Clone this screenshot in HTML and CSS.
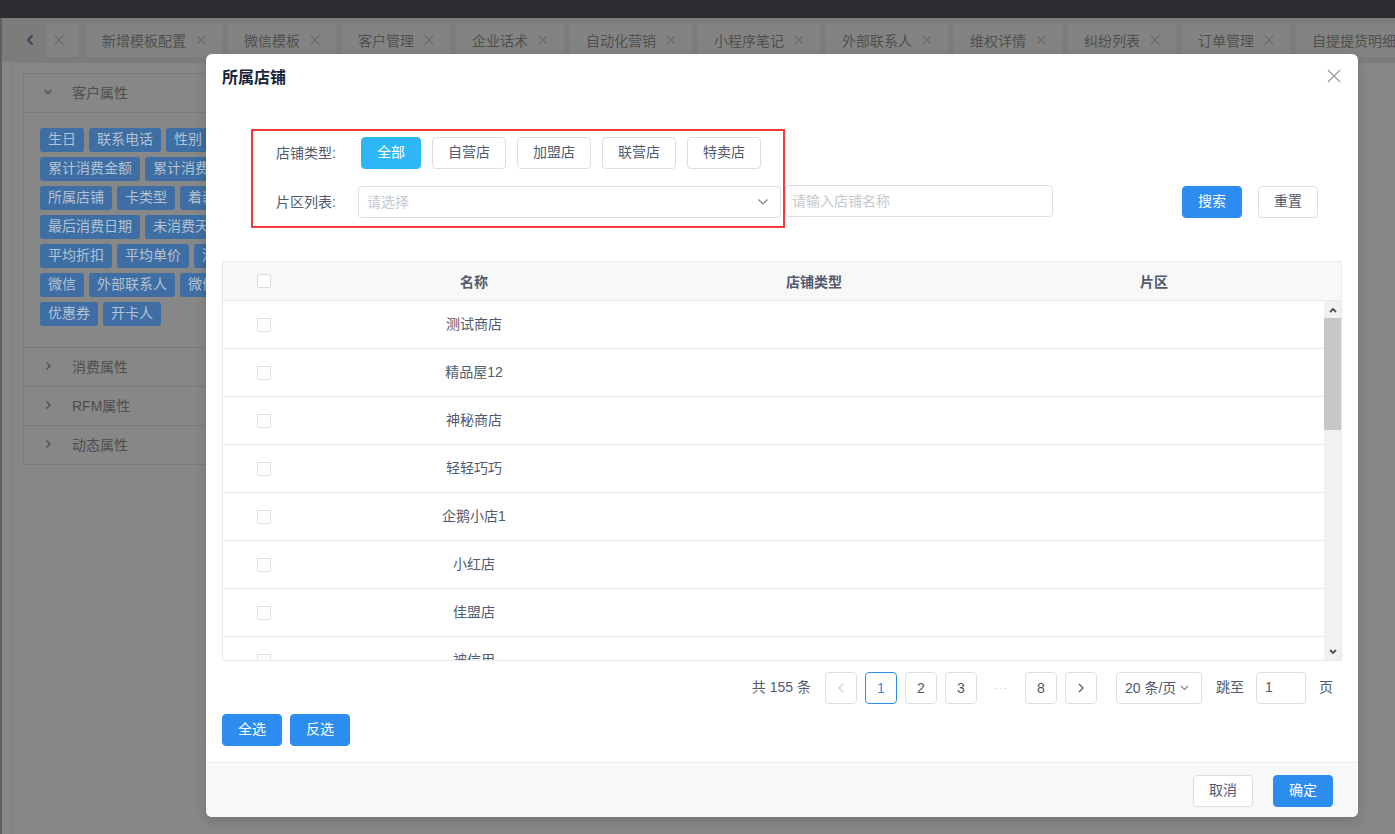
FILE: index.html
```html
<!DOCTYPE html>
<html lang="zh-CN">
<head>
<meta charset="utf-8">
<title>所属店铺</title>
<link rel="stylesheet" href="styles.css">
</head>
<body>
<div class="topbar"></div>
<div class="app">
  <div class="tabbar">
    <div class="tab-prev"><svg width="8" height="12" viewBox="0 0 8 12"><polyline points="6.5,1.5 2,6 6.5,10.5" fill="none" stroke="#37445a" stroke-width="2"/></svg></div>
    <div class="tab tab-stub"><svg class="x" width="10" height="10" viewBox="0 0 10 10"><path d="M1 1L9 9M9 1L1 9" stroke="#6c6c6c" stroke-width="1.1"/></svg></div>
    <div class="tab"><span>新增模板配置</span><svg class="x" width="10" height="10" viewBox="0 0 10 10"><path d="M1 1L9 9M9 1L1 9" stroke="#6c6c6c" stroke-width="1.1"/></svg></div>
    <div class="tab"><span>微信模板</span><svg class="x" width="10" height="10" viewBox="0 0 10 10"><path d="M1 1L9 9M9 1L1 9" stroke="#6c6c6c" stroke-width="1.1"/></svg></div>
    <div class="tab"><span>客户管理</span><svg class="x" width="10" height="10" viewBox="0 0 10 10"><path d="M1 1L9 9M9 1L1 9" stroke="#6c6c6c" stroke-width="1.1"/></svg></div>
    <div class="tab"><span>企业话术</span><svg class="x" width="10" height="10" viewBox="0 0 10 10"><path d="M1 1L9 9M9 1L1 9" stroke="#6c6c6c" stroke-width="1.1"/></svg></div>
    <div class="tab"><span>自动化营销</span><svg class="x" width="10" height="10" viewBox="0 0 10 10"><path d="M1 1L9 9M9 1L1 9" stroke="#6c6c6c" stroke-width="1.1"/></svg></div>
    <div class="tab"><span>小程序笔记</span><svg class="x" width="10" height="10" viewBox="0 0 10 10"><path d="M1 1L9 9M9 1L1 9" stroke="#6c6c6c" stroke-width="1.1"/></svg></div>
    <div class="tab"><span>外部联系人</span><svg class="x" width="10" height="10" viewBox="0 0 10 10"><path d="M1 1L9 9M9 1L1 9" stroke="#6c6c6c" stroke-width="1.1"/></svg></div>
    <div class="tab"><span>维权详情</span><svg class="x" width="10" height="10" viewBox="0 0 10 10"><path d="M1 1L9 9M9 1L1 9" stroke="#6c6c6c" stroke-width="1.1"/></svg></div>
    <div class="tab"><span>纠纷列表</span><svg class="x" width="10" height="10" viewBox="0 0 10 10"><path d="M1 1L9 9M9 1L1 9" stroke="#6c6c6c" stroke-width="1.1"/></svg></div>
    <div class="tab"><span>订单管理</span><svg class="x" width="10" height="10" viewBox="0 0 10 10"><path d="M1 1L9 9M9 1L1 9" stroke="#6c6c6c" stroke-width="1.1"/></svg></div>
    <div class="tab"><span>自提提货明细</span><svg class="x" width="10" height="10" viewBox="0 0 10 10"><path d="M1 1L9 9M9 1L1 9" stroke="#6c6c6c" stroke-width="1.1"/></svg></div>
  </div>
  <div class="main">
    <div class="card">
      <div class="collapse">
        <div class="col-item">
          <div class="col-head"><svg class="arr" width="10" height="10" viewBox="0 0 10 10"><polyline points="1.5,3 5,6.5 8.5,3" fill="none" stroke="#4e4e4e" stroke-width="1.3"/></svg><span>客户属性</span></div>
          <div class="col-body">
            <div class="tag-row"><span class="tag">生日</span><span class="tag">联系电话</span><span class="tag">性别</span><span class="tag">年龄</span><span class="tag">会员等级</span></div>
            <div class="tag-row"><span class="tag">累计消费金额</span><span class="tag">累计消费次数</span><span class="tag">积分</span></div>
            <div class="tag-row"><span class="tag">所属店铺</span><span class="tag">卡类型</span><span class="tag">着装风格</span><span class="tag">导购</span></div>
            <div class="tag-row"><span class="tag">最后消费日期</span><span class="tag">未消费天数</span><span class="tag">储值</span></div>
            <div class="tag-row"><span class="tag">平均折扣</span><span class="tag">平均单价</span><span class="tag">消费件数</span></div>
            <div class="tag-row"><span class="tag">微信</span><span class="tag">外部联系人</span><span class="tag">微信昵称</span></div>
            <div class="tag-row"><span class="tag">优惠券</span><span class="tag">开卡人</span></div>
          </div>
        </div>
        <div class="col-item"><div class="col-head"><svg class="arr" width="10" height="10" viewBox="0 0 10 10"><polyline points="3.5,1.5 7,5 3.5,8.5" fill="none" stroke="#4e4e4e" stroke-width="1.3"/></svg><span>消费属性</span></div></div>
        <div class="col-item"><div class="col-head"><svg class="arr" width="10" height="10" viewBox="0 0 10 10"><polyline points="3.5,1.5 7,5 3.5,8.5" fill="none" stroke="#4e4e4e" stroke-width="1.3"/></svg><span>RFM属性</span></div></div>
        <div class="col-item last"><div class="col-head"><svg class="arr" width="10" height="10" viewBox="0 0 10 10"><polyline points="3.5,1.5 7,5 3.5,8.5" fill="none" stroke="#4e4e4e" stroke-width="1.3"/></svg><span>动态属性</span></div></div>
      </div>
    </div>
  </div>
</div>

<div class="modal">
  <div class="modal-head">
    <div class="modal-title">所属店铺</div>
    <a class="modal-close"><svg width="14" height="14" viewBox="0 0 14 14"><path d="M1 1L13 13M13 1L1 13" stroke="#999" stroke-width="1.2"/></svg></a>
  </div>
  <div class="modal-body">
    <div class="filter">
      <div class="frow">
        <label class="flabel">店铺类型:</label>
        <div class="type-btns">
          <button class="btn btn-info">全部</button>
          <button class="btn">自营店</button>
          <button class="btn">加盟店</button>
          <button class="btn">联营店</button>
          <button class="btn">特卖店</button>
        </div>
      </div>
      <div class="frow">
        <label class="flabel">片区列表:</label>
        <div class="select"><span class="ph">请选择</span><svg width="12" height="8" viewBox="0 0 12 8"><polyline points="1.5,1.5 6,6 10.5,1.5" fill="none" stroke="#808695" stroke-width="1.2"/></svg></div>
        <div class="input"><span class="ph">请输入店铺名称</span></div>
        <button class="btn btn-primary btn-search">搜索</button>
        <button class="btn btn-reset">重置</button>
      </div>
    </div>

    <div class="table">
      <div class="thead">
        <div class="cell cb"><span class="checkbox"></span></div>
        <div class="cell">名称</div>
        <div class="cell">店铺类型</div>
        <div class="cell">片区</div>
        <div class="cell gutter"></div>
      </div>
      <div class="tbody">
        <div class="rows">
          <div class="tr"><div class="cell cb"><span class="checkbox"></span></div><div class="cell">测试商店</div><div class="cell"></div><div class="cell"></div></div>
          <div class="tr"><div class="cell cb"><span class="checkbox"></span></div><div class="cell">精品屋12</div><div class="cell"></div><div class="cell"></div></div>
          <div class="tr"><div class="cell cb"><span class="checkbox"></span></div><div class="cell">神秘商店</div><div class="cell"></div><div class="cell"></div></div>
          <div class="tr"><div class="cell cb"><span class="checkbox"></span></div><div class="cell">轻轻巧巧</div><div class="cell"></div><div class="cell"></div></div>
          <div class="tr"><div class="cell cb"><span class="checkbox"></span></div><div class="cell">企鹅小店1</div><div class="cell"></div><div class="cell"></div></div>
          <div class="tr"><div class="cell cb"><span class="checkbox"></span></div><div class="cell">小红店</div><div class="cell"></div><div class="cell"></div></div>
          <div class="tr"><div class="cell cb"><span class="checkbox"></span></div><div class="cell">佳盟店</div><div class="cell"></div><div class="cell"></div></div>
          <div class="tr"><div class="cell cb"><span class="checkbox"></span></div><div class="cell">被信用</div><div class="cell"></div><div class="cell"></div></div>
        </div>
        <div class="scrollbar">
          <div class="sb-btn"><svg width="8" height="6" viewBox="0 0 8 6"><polyline points="1,5 4,2 7,5" fill="none" stroke="#505050" stroke-width="1.8"/></svg></div>
          <div class="sb-track"><div class="sb-thumb"></div></div>
          <div class="sb-btn"><svg width="8" height="6" viewBox="0 0 8 6"><polyline points="1,1 4,4 7,1" fill="none" stroke="#505050" stroke-width="1.8"/></svg></div>
        </div>
      </div>
    </div>

    <div class="pager">
      <span class="total">共 155 条</span>
      <span class="pitem disabled"><svg width="6" height="10" viewBox="0 0 6 10"><polyline points="5,1 1,5 5,9" fill="none" stroke="#c5c8ce" stroke-width="1.2"/></svg></span>
      <span class="pitem active">1</span>
      <span class="pitem">2</span>
      <span class="pitem">3</span>
      <span class="pitem ellipsis">···</span>
      <span class="pitem">8</span>
      <span class="pitem"><svg width="6" height="10" viewBox="0 0 6 10"><polyline points="1,1 5,5 1,9" fill="none" stroke="#515a6e" stroke-width="1.2"/></svg></span>
      <span class="psize">20 条/页<svg width="9" height="6" viewBox="0 0 9 6"><polyline points="1,1 4.5,4.5 8,1" fill="none" stroke="#808695" stroke-width="1.2"/></svg></span>
      <span class="jump">跳至</span>
      <span class="jinput">1</span>
      <span class="jpage">页</span>
    </div>

    <div class="sel-btns">
      <button class="btn btn-primary">全选</button>
      <button class="btn btn-primary">反选</button>
    </div>
  </div>
  <div class="modal-foot">
    <button class="btn">取消</button>
    <button class="btn btn-primary">确定</button>
  </div>
  <div class="annot"></div>
</div>
</body>
</html>
```

FILE: styles.css
```css
* { box-sizing: border-box; }
html, body { margin: 0; padding: 0; }
body {
  width: 1395px;
  height: 834px;
  overflow: hidden;
  position: relative;
  background: #878787;
  font-family: "Liberation Sans", "Noto Sans CJK SC", sans-serif;
  font-size: 14px;
  color: #515a6e;
}

/* ---------- dimmed background page ---------- */
.topbar { height: 18px; background: #2c2b30; }
.app { border-left: 2px solid #5e5e5e; height: 816px; overflow: hidden; }

.tabbar {
  height: 44px;
  background: #7c7c7c;
  display: flex;
  align-items: flex-start;
  padding-top: 5px;
  overflow: hidden;
  white-space: nowrap;
}
.tab-prev {
  width: 44px;
  height: 34px;
  padding-left: 24px;
  display: flex;
  align-items: center;
  flex: none;
}
.tab {
  flex: none;
  height: 34px;
  background: #838383;
  border-radius: 3px 3px 0 0;
  display: flex;
  align-items: center;
  padding: 0 16px;
  margin-right: 6px;
  color: #4f4f4f;
  font-size: 14px;
  line-height: 34px;
}
.tab span { position: relative; top: 1px; }
.tab .x { margin-left: 10px; flex: none; }
.tab-stub { width: 33px; padding: 0 0 0 8px; margin-right: 7px; }
.tab-stub .x { margin-left: 0; }

.main { padding-left: 10px; }
.card {
  height: 900px;
  width: 1500px;
  border: 1px solid #7d7d7d;
  border-radius: 4px;
  background: #878787;
  padding: 10px;
}
.collapse {
  width: 640px;
  border: 1px solid #7a7a7a;
  border-radius: 3px;
  background: #878787;
}
.col-item { border-bottom: 1px solid #7a7a7a; }
.col-item.last { border-bottom: none; }
.col-head {
  height: 38px;
  display: flex;
  align-items: center;
  padding-left: 19px;
  padding-bottom: 2px;
  color: #4e4e4e;
  font-size: 14px;
}
.col-head .arr { margin-right: 19px; }
.col-body {
  border-top: 1px solid #7a7a7a;
  padding: 15px 16px 21px;
  display: flex;
  flex-direction: column;
  gap: 5px;
}
.tag-row { display: flex; gap: 5px; white-space: nowrap; }
.tag {
  height: 24px;
  line-height: 22px;
  padding: 0 8px;
  border-radius: 3px;
  background: #3e6ea3;
  color: #b3c2d4;
  font-size: 14px;
}

/* ---------- modal ---------- */
.modal {
  position: absolute;
  left: 206px;
  top: 54px;
  width: 1152px;
  height: 763px;
  background: #fff;
  border-radius: 6px;
  box-shadow: 0 4px 12px rgba(0,0,0,0.15);
  display: flex;
  flex-direction: column;
}
.modal-head { height: 48px; padding: 14px 16px; position: relative; }
.modal-title { font-size: 16px; line-height: 20px; font-weight: bold; color: #17233d; }
.modal-close { position: absolute; right: 17px; top: 15px; width: 14px; height: 14px; display: block; }
.modal-close svg { display: block; }

.modal-body { padding: 0 16px 16px; flex: 1; }

.filter { margin-top: 35px; padding-left: 54px; }
.frow { display: flex; align-items: center; height: 32px; }
.frow + .frow { margin-top: 17px; }
.flabel { width: 82px; flex: none; color: #515a6e; font-size: 14px; line-height: 30px; }
.type-btns { display: flex; gap: 11px; padding-left: 3px; }

.btn {
  height: 32px;
  padding: 0 15px 2px;
  border: 1px solid #dcdee2;
  border-radius: 4px;
  background: #fff;
  color: #515a6e;
  font-family: inherit;
  font-size: 14px;
  line-height: 28px;
  cursor: pointer;
  flex: none;
}
.btn-info { background: #2db7f5; border-color: #2db7f5; color: #fff; }
.btn-primary { background: #2d8cf0; border-color: #2d8cf0; color: #fff; }

.select {
  width: 423px;
  height: 32px;
  border: 1px solid #dcdee2;
  border-radius: 4px;
  display: flex;
  align-items: center;
  justify-content: space-between;
  padding: 0 11px 0 8px;
  flex: none;
}
.select .ph { position: relative; top: -1px; }
.input {
  width: 268px;
  height: 32px;
  margin-left: 4px;
  margin-top: -2px;
  border: 1px solid #dcdee2;
  border-radius: 4px;
  display: flex;
  align-items: center;
  padding-left: 6px;
  padding-bottom: 2px;
  flex: none;
}
.ph { color: #c5c8ce; font-size: 14px; }
.btn-search { margin-left: 129px; width: 60px; padding: 0 0 2px; }
.btn-reset { margin-left: 16px; width: 60px; padding: 0 0 2px; }

/* ---------- table ---------- */
.table {
  margin-top: 43px;
  border: 1px solid #e8eaec;
  width: 1120px;
}
.thead {
  display: grid;
  grid-template-columns: 81px 340px 340px 340px 17px;
  height: 39px;
  background: #f8f8f9;
  border-bottom: 1px solid #e8eaec;
  font-weight: bold;
  color: #515a6e;
}
.cell {
  display: flex;
  align-items: center;
  justify-content: center;
  font-size: 14px;
}
.thead .cell { height: 38px; padding-bottom: 1px; }
.thead .cell.cb { padding-bottom: 0; }
.checkbox {
  width: 14px;
  height: 14px;
  border: 1px solid #dcdee2;
  border-radius: 2px;
  background: #fff;
  display: block;
}
.tbody { display: flex; height: 359px; }
.rows { width: 1101px; height: 359px; overflow: hidden; }
.tr {
  display: grid;
  grid-template-columns: 81px 340px 340px 340px;
  height: 48px;
  border-bottom: 1px solid #e8eaec;
}
.tr .cell { height: 47px; padding-bottom: 3px; }
.tr .cell.cb { padding-bottom: 0; }

.scrollbar {
  width: 17px;
  height: 359px;
  background: #f1f1f1;
  display: flex;
  flex-direction: column;
}
.sb-btn { height: 17px; display: flex; align-items: center; justify-content: center; flex: none; }
.sb-track { flex: 1; }
.sb-thumb { height: 112px; background: #c7c7c7; }

/* ---------- pager ---------- */
.pager {
  margin-top: 11px;
  height: 32px;
  display: flex;
  align-items: center;
  justify-content: flex-end;
  padding-right: 9px;
  font-size: 14px;
  color: #515a6e;
}
.total, .jump, .jpage { position: relative; top: -2px; }
.total { margin-right: 14px; }
.pitem {
  width: 32px;
  height: 32px;
  border: 1px solid #dcdee2;
  border-radius: 4px;
  display: flex;
  align-items: center;
  justify-content: center;
  margin-right: 8px;
  padding-bottom: 1px;
  font-family: "Liberation Sans", sans-serif;
}
.pitem.active { border-color: #2d8cf0; color: #2d8cf0; }
.pitem.ellipsis { border: none; color: #ccc; font-size: 12px; letter-spacing: 1px; }
.psize {
  margin-left: 11px;
  width: 86px;
  height: 32px;
  border: 1px solid #dcdee2;
  border-radius: 4px;
  display: flex;
  align-items: center;
  padding-left: 8px;
  padding-bottom: 2px;
}
.psize svg { margin-left: 4px; margin-top: 2px; }
.jump { margin-left: 14px; }
.jinput {
  margin-left: 12px;
  width: 50px;
  height: 32px;
  border: 1px solid #dcdee2;
  border-radius: 4px;
  display: flex;
  align-items: center;
  padding-left: 8px;
  padding-bottom: 2px;
}
.jpage { margin-left: 13px; }

.sel-btns { margin-top: 10px; display: flex; gap: 8px; }
.sel-btns .btn { width: 60px; padding: 0 0 2px; }

.modal-foot {
  height: 56px;
  border-top: 1px solid #e8eaec;
  background: #f7f8fa;
  border-radius: 0 0 6px 6px;
  display: flex;
  justify-content: flex-end;
  align-items: flex-start;
  gap: 20px;
  padding: 12px 25px 0 0;
}
.modal-foot .btn { width: 60px; padding: 0 0 2px; }

/* annotation box drawn over the filter */
.annot {
  position: absolute;
  left: 45px;
  top: 75px;
  width: 534px;
  height: 99px;
  border: 2px solid #f23b3b;
  pointer-events: none;
}
```
